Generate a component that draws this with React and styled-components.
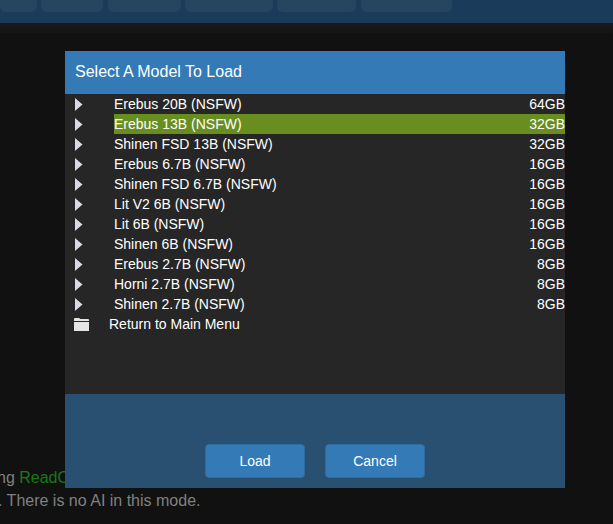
import React from "react";
import styled, { createGlobalStyle } from "styled-components";

const GlobalStyle = createGlobalStyle`
  html, body {
    margin: 0;
    height: 100%;
    background: #111;
    font-family: "Liberation Sans", Arial, sans-serif;
    overflow: hidden;
  }
`;

const navItems = [36.5, 62, 73, 87.5, 79, 91];

const models = [
  ["Erebus 20B (NSFW)", "64GB"],
  ["Erebus 13B (NSFW)", "32GB", true],
  ["Shinen FSD 13B (NSFW)", "32GB"],
  ["Erebus 6.7B (NSFW)", "16GB"],
  ["Shinen FSD 6.7B (NSFW)", "16GB"],
  ["Lit V2 6B (NSFW)", "16GB"],
  ["Lit 6B (NSFW)", "16GB"],
  ["Shinen 6B (NSFW)", "16GB"],
  ["Erebus 2.7B (NSFW)", "8GB"],
  ["Horni 2.7B (NSFW)", "8GB"],
  ["Shinen 2.7B (NSFW)", "8GB"],
];

function Arrow() {
  return (
    <svg width="8" height="13" viewBox="0 0 8 13">
      <path d="M0 0 L7.500 6.500 L0 13 Z" fill="#dcd8e6" />
    </svg>
  );
}

function Folder() {
  return (
    <svg width="15" height="13" viewBox="0 0 15 13">
      <path d="M0 1 Q0 0 1 0 H5 L6.500 1 H14 Q15 1 15 2 V3 H0 Z" fill="#e4e4e4" />
      <path d="M0 4 H15 V13 H0 Z" fill="#e4e4e4" />
    </svg>
  );
}

export default function App() {
  return (
    <Page>
      <GlobalStyle />
      <TopBar>
        {navItems.map((w, i) => (
          <NavButton key={i} $width={w} />
        ))}
      </TopBar>
      <TopShade />
      <GameText>
        <FirstLine>
          ng <Green>ReadO</Green>
        </FirstLine>
        <SecondLine>. There is no AI in this mode.</SecondLine>
      </GameText>

      <Modal>
        <Header>Select A Model To Load</Header>
        <List>
          {models.map(([name, size, selected]) => (
            <Row key={name}>
              <IconCell>
                <Arrow />
              </IconCell>
              <Label $selected={selected}>
                <span>{name}</span>
                <span>{size}</span>
              </Label>
            </Row>
          ))}
          <Row>
            <FolderCell>
              <Folder />
            </FolderCell>
            <span>Return to Main Menu</span>
          </Row>
        </List>
        <Footer>
          <Button>Load</Button>
          <Button>Cancel</Button>
        </Footer>
      </Modal>
    </Page>
  );
}

const Page = styled.div`
  position: relative;
  width: 613px;
  height: 524px;
  overflow: hidden;
  background: #111;
`;

const TopBar = styled.div`
  display: flex;
  gap: 4.500px;
  height: 23px;
  background: #1b3b5a;
`;

const NavButton = styled.div`
  width: ${(props) => props.$width}px;
  height: 12px;
  background: #264561;
  border-radius: 0 0 6px 6px;
`;

const TopShade = styled.div`
  height: 10px;
  background: linear-gradient(#1a1a1a, #141414);
`;

const GameText = styled.div`
  margin-top: 433px;
  color: #808080;
  font-size: 16px;
  line-height: 23px;
`;

const FirstLine = styled.div`
  margin-left: -3px;
`;

const SecondLine = styled.div`
  margin-left: -2px;
`;

const Green = styled.span`
  color: #187a18;
`;

const Modal = styled.div`
  position: absolute;
  left: 65px;
  top: 51px;
  width: 500px;
  height: 437px;
  display: flex;
  flex-direction: column;
  background: #262626;
  color: #fff;
`;

const Header = styled.div`
  height: 41px;
  padding: 0 0 2px 10px;
  display: flex;
  align-items: center;
  background: #337ab7;
  font-size: 16px;
`;

const List = styled.div`
  height: 300px;
  font-size: 14px;
`;

const Row = styled.div`
  display: flex;
  align-items: center;
  height: 20px;
`;

const IconCell = styled.div`
  width: 49px;
  padding: 1px 0 0 10px;
  box-sizing: border-box;
  display: flex;
  align-items: center;
`;

const FolderCell = styled.div`
  width: 44px;
  padding: 1px 0 0 9px;
  box-sizing: border-box;
  display: flex;
  align-items: center;
`;

const Label = styled.div`
  flex: 1;
  display: flex;
  justify-content: space-between;
  line-height: 20px;
  background: ${(props) => (props.$selected ? "#688e1f" : "transparent")};
`;

const Footer = styled.div`
  flex: 1;
  display: flex;
  justify-content: center;
  align-items: flex-end;
  gap: 20px;
  padding-bottom: 10px;
  background: #2a5071;
`;

const Button = styled.button`
  width: 100px;
  height: 34px;
  padding: 0;
  background: #337ab7;
  border: 1px solid #2e6da4;
  border-radius: 4px;
  color: #fff;
  font-family: inherit;
  font-size: 14px;
`;
